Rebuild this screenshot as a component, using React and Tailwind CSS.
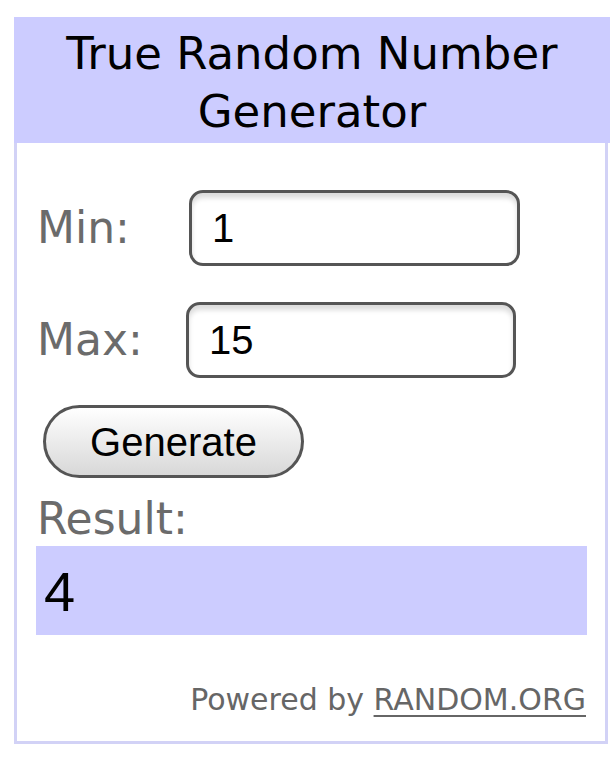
import React from "react";

const labelFont = { fontFamily: '"DejaVu Sans", Verdana, sans-serif' };

const App = () => {
  return (
    <div className="min-h-screen bg-white pt-[17px]">
      <div className="ml-[14px] w-[596px]">
        <div
          className="bg-[#ccccff] h-[126px] pt-[8px] text-center text-[45px] leading-[58px] text-black"
          style={labelFont}
        >
          True Random Number
          <br />
          Generator
        </div>
        <div className="border-[3px] border-t-0 border-[#d2d2f6] w-[594px] h-[601px] pl-[20px] pr-[18px] pt-[47px]">
          <div className="flex items-center h-[76px]">
            <span className="w-[152px] text-[44px] text-[#6b6b6b]" style={labelFont}>
              Min:
            </span>
            <div className="w-[331px] h-[76px] rounded-[14px] border-[3px] border-[#555] shadow-[inset_0_5px_5px_rgba(0,0,0,0.14)] flex items-center pl-[20px] text-[40px] text-black font-['Liberation_Sans',Arial,sans-serif]">
              1
            </div>
          </div>
          <div className="flex items-center h-[76px] mt-[36px]">
            <span className="w-[149px] text-[44px] text-[#6b6b6b]" style={labelFont}>
              Max:
            </span>
            <div className="w-[330px] h-[76px] rounded-[14px] border-[3px] border-[#555] shadow-[inset_0_5px_5px_rgba(0,0,0,0.14)] flex items-center pl-[20px] text-[40px] text-black font-['Liberation_Sans',Arial,sans-serif]">
              15
            </div>
          </div>
          <button className="mt-[27px] ml-[6px] w-[261px] h-[73px] rounded-full border-[3px] border-[#555] bg-gradient-to-b from-white to-[#d8d8d8] text-[40px] text-black font-['Liberation_Sans',Arial,sans-serif] leading-none">
            Generate
          </button>
          <div className="mt-[15px] text-[44px] leading-[52px] text-[#6b6b6b]" style={labelFont}>
            Result:
          </div>
          <div className="mt-[1px] -ml-[1px] w-[551px] h-[89px] bg-[#ccccff] flex items-center pl-[8px] pt-[2px] text-[56px] text-black font-['Liberation_Sans',Arial,sans-serif]">
            4
          </div>
          <div className="mt-[47px] w-[549px] text-right text-[30px] leading-[36px] text-[#666]" style={labelFont}>
            Powered by <span className="underline decoration-[2px] underline-offset-[5px]">RANDOM.ORG</span>
          </div>
        </div>
      </div>
    </div>
  );
};

export default App;
